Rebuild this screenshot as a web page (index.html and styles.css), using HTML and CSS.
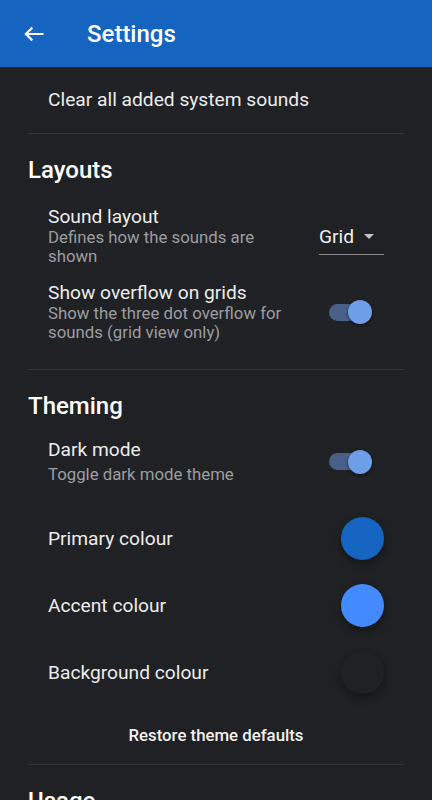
FILE: index.html
```html
<!DOCTYPE html>
<html lang="en">

<head>
    <meta charset="UTF-8" />
    <meta name="viewport" content="width=device-width, initial-scale=1.0" />
    <title>Settings</title>
    <link rel="stylesheet" href="styles.css">
</head>

<body>
    <header class="appbar">
        <svg class="back" width="22" height="16" viewBox="0 0 22 16">
            <path d="M20.5 8H3 M9.3 1.6 L2.9 8 L9.3 14.4" fill="none" stroke="#fff" stroke-width="2.2" />
        </svg>
        <span class="appbar-title">Settings</span>
    </header>

    <main class="content">
        <div class="row row-single">
            <span class="pref-title">Clear all added system sounds</span>
        </div>
        <div class="divider"></div>

        <h2 class="heading">Layouts</h2>
        <div class="row pref">
            <div class="pref-text">
                <div class="pref-title">Sound layout</div>
                <div class="pref-sub">Defines how the sounds are<br>shown</div>
            </div>
            <div class="dropdown">
                <span>Grid</span>
                <span class="caret"></span>
            </div>
        </div>
        <div class="row pref">
            <div class="pref-text">
                <div class="pref-title">Show overflow on grids</div>
                <div class="pref-sub">Show the three dot overflow for<br>sounds (grid view only)</div>
            </div>
            <div class="switch">
                <span class="track"></span>
                <span class="knob"></span>
            </div>
        </div>
        <div class="divider divider-gap"></div>

        <h2 class="heading">Theming</h2>
        <div class="row pref pref-dark">
            <div class="pref-text">
                <div class="pref-title">Dark mode</div>
                <div class="pref-sub">Toggle dark mode theme</div>
            </div>
            <div class="switch">
                <span class="track"></span>
                <span class="knob"></span>
            </div>
        </div>
        <div class="row row-colour">
            <span class="pref-title">Primary colour</span>
            <span class="swatch swatch-primary"></span>
        </div>
        <div class="row row-colour">
            <span class="pref-title">Accent colour</span>
            <span class="swatch swatch-accent"></span>
        </div>
        <div class="row row-colour">
            <span class="pref-title">Background colour</span>
            <span class="swatch swatch-bg"></span>
        </div>
        <div class="restore">Restore theme defaults</div>
        <div class="divider"></div>

        <h2 class="heading">Usage</h2>
    </main>
</body>

</html>
```

FILE: styles.css
```css
body {
    margin: 0;
    background: #202124;
    font-family: Roboto, "Noto Sans", sans-serif;
    color: #e8e8e8;
    overflow: hidden;
}

.appbar {
    height: 67px;
    background: #1565c0;
    display: flex;
    align-items: center;
    padding-left: 23px;
    box-sizing: border-box;
}

.back {
    display: block;
}

.appbar-title {
    margin-left: 42px;
    color: #fff;
    font-size: 24px;
    font-weight: 500;
}

.content {
    padding: 0 28px;
}

.row {
    display: flex;
    align-items: center;
    justify-content: space-between;
    padding: 0 20px;
}

.row-single {
    height: 66px;
}

.pref {
    padding-top: 8px;
    padding-bottom: 8px;
}

.pref-dark {
    padding-top: 5px;
    padding-bottom: 21px;
}

.pref-title {
    font-size: 19.2px;
    line-height: 22px;
    color: #ececec;
}

.pref-sub {
    font-size: 16.8px;
    line-height: 19px;
    color: #9c9da0;
}

.pref-dark .pref-sub {
    margin-top: 4px;
}

.divider {
    height: 1px;
    background: #333538;
}

.divider-gap {
    margin-top: 19px;
}

.heading {
    margin: 22px 0 14px;
    font-size: 24px;
    line-height: 28px;
    font-weight: 500;
    color: #fff;
}

.dropdown {
    display: flex;
    align-items: center;
    width: 65px;
    height: 38px;
    box-sizing: border-box;
    border-bottom: 1px solid #8a8b8e;
    font-size: 19.2px;
    color: #f0f0f0;
    padding-top: 1px;
}

.caret {
    margin-left: 10px;
    width: 0;
    height: 0;
    border-left: 5.5px solid transparent;
    border-right: 5.5px solid transparent;
    border-top: 5.5px solid #c4c4c6;
}

.switch {
    position: relative;
    width: 43px;
    height: 24px;
    margin-right: 12px;
}

.track {
    position: absolute;
    left: 0;
    top: 3.5px;
    width: 41px;
    height: 17px;
    border-radius: 9px;
    background: #485f88;
}

.knob {
    position: absolute;
    right: 0;
    top: 0;
    width: 24px;
    height: 24px;
    border-radius: 50%;
    background: #6f9ee9;
    box-shadow: 0 1px 3px rgba(0, 0, 0, 0.6);
}

.row-colour {
    height: 67px;
}

.swatch {
    width: 43px;
    height: 43px;
    border-radius: 50%;
    box-shadow: 0 4px 8px rgba(0, 0, 0, 0.4);
}

.swatch-primary {
    background: #1565c0;
}

.swatch-accent {
    background: #448aff;
}

.swatch-bg {
    background: #202124;
}

.restore {
    height: 58px;
    line-height: 58px;
    text-align: center;
    font-size: 16.8px;
    font-weight: 500;
    color: #f2f2f2;
}
```
